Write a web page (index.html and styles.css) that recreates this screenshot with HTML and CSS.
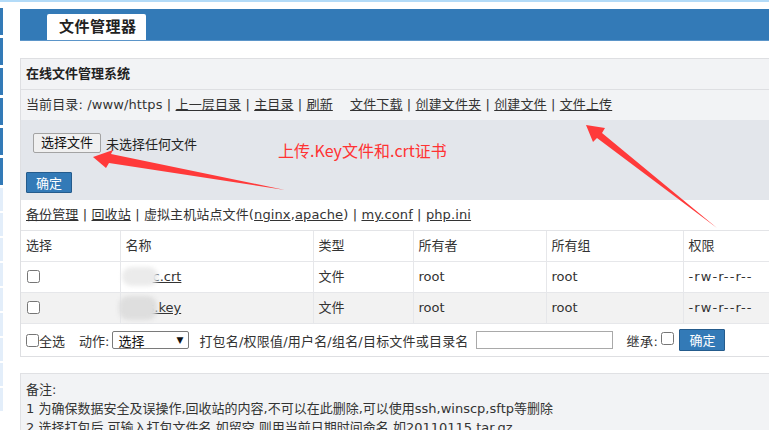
FILE: index.html
```html
<!DOCTYPE html>
<html lang="zh-CN">
<head>
<meta charset="utf-8">
<title>文件管理器</title>
<link rel="stylesheet" href="styles.css">
</head>
<body>
<div class="topline"></div>
<div class="layout">
  <div class="sidebar">
    <div class="sb blue"></div><div class="sb blue"></div><div class="sb blue"></div>
    <div class="sb blue"></div><div class="sb blue"></div><div class="sb blue"></div>
    <div class="sb light"></div><div class="sb light"></div><div class="sb light"></div>
    <div class="sb light"></div><div class="sb light"></div><div class="sb light"></div>
    <div class="sb light"></div><div class="sb light"></div><div class="sb light"></div>
  </div>
  <div class="main">
    <div class="header"><div class="tab">文件管理器</div></div>
    <div class="panel">
      <div class="ptitle">在线文件管理系统</div>
      <div class="pathrow">当前目录: /www/https | <a>上一层目录</a> | <a>主目录</a> | <a>刷新</a> <a class="gap">文件下载</a> | <a>创建文件夹</a> | <a>创建文件</a> | <a>文件上传</a></div>
      <div class="upload">
        <div class="fileline"><span class="filebtn">选择文件</span><span class="nofile">未选择任何文件</span></div>
        <button class="btn">确定</button>
      </div>
      <div class="links"><a>备份管理</a> | <a>回收站</a> | 虚拟主机站点文件(<a>nginx</a>,<a>apache</a>) | <a>my.conf</a> | <a>php.ini</a></div>
      <table class="files">
        <colgroup><col class="c1"><col class="c2"><col class="c3"><col class="c4"><col class="c5"><col></colgroup>
        <tr><td>选择</td><td>名称</td><td>类型</td><td>所有者</td><td>所有组</td><td>权限</td></tr>
        <tr><td><input type="checkbox" class="cb"></td><td class="name"><span class="mask m1"></span><a class="fname n1">c.crt</a></td><td>文件</td><td>root</td><td>root</td><td class="perm">-rw-r--r--</td></tr>
        <tr class="alt"><td><input type="checkbox" class="cb"></td><td class="name"><span class="mask m2"></span><a class="fname n2">s.key</a></td><td>文件</td><td>root</td><td>root</td><td class="perm">-rw-r--r--</td></tr>
      </table>
      <div class="actions">
        <label class="all"><input type="checkbox" class="cb0">全选</label>
        <span class="act">动作:</span>
        <span class="select">选择<span class="caret">▼</span></span>
        <span class="hint">打包名/权限值/用户名/组名/目标文件或目录名</span>
        <span class="textbox"></span>
        <span class="inherit">继承:</span><input type="checkbox" class="cb1">
        <button class="btn btn2">确定</button>
      </div>
    </div>
    <div class="notes">
      <div>备注:</div>
      <div>1 为确保数据安全及误操作,回收站的内容,不可以在此删除,可以使用ssh,winscp,sftp等删除</div>
      <div>2 选择打包后,可输入打包文件名,如留空,则用当前日期时间命名,如20110115.tar.gz</div>
    </div>
  </div>
</div>
<div class="annot">上传.Key文件和.crt证书</div>
<svg class="arrows" width="769" height="430" viewBox="0 0 769 430">
  <polygon points="93,157 113,150 111,154 285,190 109,163 106,168" fill="#ff3a3a"/>
  <polygon points="586,125 605,128 602,133 717,228 597,138 593,142" fill="#ff3a3a"/>
</svg>
</body>
</html>
```

FILE: styles.css
```css
html, body {
  margin: 0;
  padding: 0;
  overflow: hidden;
}
body {
  font-family: "DejaVu Sans", "Noto Sans CJK SC", sans-serif;
  font-size: 13px;
  color: #333;
  background: #fff;
  width: 769px;
  height: 430px;
}
a {
  color: #333;
  text-decoration: underline;
}
.topline {
  height: 2px;
  background: #b3dbf8;
}
.layout {
  display: flex;
  margin-top: 6px;
}
.sidebar {
  width: 3px;
  flex: none;
  display: flex;
  flex-direction: column;
}
.sb.blue {
  height: 27px;
  margin-bottom: 3px;
  background: #337ab7;
}
.sb.light {
  height: 23px;
  margin-bottom: 2px;
  background: #e3eefa;
}
.main {
  flex: 1;
  min-width: 0;
  padding-left: 17px;
  padding-top: 1px;
  overflow: hidden;
}
.header {
  height: 32px;
  background: #337ab7;
  border-bottom: 1px solid #5b95c9;
  box-sizing: border-box;
  padding-left: 27px;
  display: flex;
  align-items: flex-end;
}
.tab {
  width: 99px;
  height: 26px;
  box-sizing: border-box;
  background: #fff;
  border-radius: 2px 2px 0 0;
  padding-left: 12px;
  font-size: 15px;
  font-weight: bold;
  line-height: 27px;
  color: #222;
  letter-spacing: 0.5px;
}
.panel {
  margin-top: 17px;
  margin-right: -10px;
  border: 1px solid #dedfe2;
  background: #f2f3f5;
}
.ptitle {
  height: 30px;
  line-height: 30px;
  padding-left: 5px;
  font-weight: bold;
  color: #222;
  border-bottom: 1px solid #dedfe2;
}
.pathrow {
  height: 30px;
  line-height: 30px;
  padding-left: 5px;
  letter-spacing: 0.12px;
}
.pathrow .gap {
  margin-left: 13px;
}
.upload {
  background: #e3e6eb;
  height: 80px;
  box-sizing: border-box;
  padding: 13px 0 0 5px;
}
.fileline {
  margin-left: 7px;
  height: 20px;
  display: flex;
  align-items: center;
}
.filebtn {
  display: inline-block;
  width: 68px;
  height: 20px;
  box-sizing: border-box;
  border: 1px solid #a3a3a3;
  border-radius: 2px;
  background: #f0f0f0;
  text-align: center;
  line-height: 18px;
  color: #111;
}
.nofile {
  margin-left: 5px;
  color: #222;
}
.btn {
  display: block;
  margin-top: 19px;
  width: 46px;
  height: 21px;
  padding: 0;
  border: 1px solid #245b8c;
  border-radius: 1px;
  background: #337ab7;
  color: #fff;
  font-family: "Noto Sans CJK SC", sans-serif;
  font-size: 13px;
  line-height: 19px;
}
.links {
  height: 30px;
  line-height: 30px;
  padding-left: 5px;
  background: #fff;
  border-bottom: 1px solid #e3e4e7;
  letter-spacing: 0.12px;
}
.files {
  width: 100%;
  border-collapse: collapse;
  background: #fff;
  table-layout: fixed;
}
.files col.c1 { width: 99px; }
.files col.c2 { width: 193px; }
.files col.c3 { width: 100px; }
.files col.c4 { width: 133px; }
.files col.c5 { width: 137px; }
.files td {
  height: 30px;
  padding: 0 5px;
  border: 1px solid #e6e7ea;
  border-top: none;
  box-sizing: border-box;
  line-height: 30px;
  vertical-align: middle;
  white-space: nowrap;
}
.files tr td:first-child {
  border-left: none;
}
.files tr.alt td {
  background: #f2f2f2;
}
.files tr td {
  border-bottom: 1px solid #e6e7ea;
}
.files td.perm {
  letter-spacing: 1.1px;
}
.cb {
  margin: 0 0 2px 1px;
  vertical-align: middle;
}
.name {
  position: relative;
}
.mask {
  position: absolute;
  border-radius: 9px;
  filter: blur(2px);
  z-index: 1;
}
.m1 {
  left: 1px;
  top: 5px;
  width: 36px;
  height: 19px;
  background: #ebebeb;
}
.m2 {
  left: -2px;
  top: 3px;
  width: 38px;
  height: 24px;
  background: #dedede;
}
.fname {
  position: relative;
}
.n1 { margin-left: 27px; }
.n2 { margin-left: 22px; }
.actions {
  height: 32px;
  background: #fff;
  display: flex;
  align-items: center;
  padding-left: 5px;
  white-space: nowrap;
}
.all {
  display: flex;
  align-items: center;
}
.cb0 {
  margin: 0;
}
.act {
  margin-left: 14px;
}
.select {
  margin-left: 3px;
  width: 77px;
  height: 18px;
  box-sizing: border-box;
  border: 1px solid #7a7a7a;
  border-radius: 2px;
  background: #fff;
  display: flex;
  align-items: center;
  justify-content: space-between;
  padding: 0 5px 0 5px;
  color: #111;
  font-size: 13px;
}
.caret {
  font-size: 9px;
  color: #111;
}
.hint {
  margin-left: 10px;
  letter-spacing: 0.2px;
}
.textbox {
  margin-left: 7px;
  width: 137px;
  height: 18px;
  box-sizing: border-box;
  border: 1px solid #a9a9a9;
  background: #fff;
}
.inherit {
  margin-left: 14px;
  letter-spacing: 0.5px;
}
.cb1 {
  margin: 0 0 4px 3px;
}
.btn2 {
  margin: 0 0 0 5px;
  height: 22px;
  line-height: 20px;
}
.notes {
  margin-top: 16px;
  margin-right: -10px;
  border: 1px solid #e0e1e4;
  background: #f2f3f5;
  padding: 6px 5px 0 5px;
  line-height: 19px;
  height: 80px;
}
.annot {
  position: absolute;
  left: 278px;
  top: 141px;
  font-family: "Noto Sans CJK SC", sans-serif;
  font-size: 16px;
  line-height: 18px;
  color: #ff3333;
}
.arrows {
  position: absolute;
  left: 0;
  top: 0;
  pointer-events: none;
}
```
